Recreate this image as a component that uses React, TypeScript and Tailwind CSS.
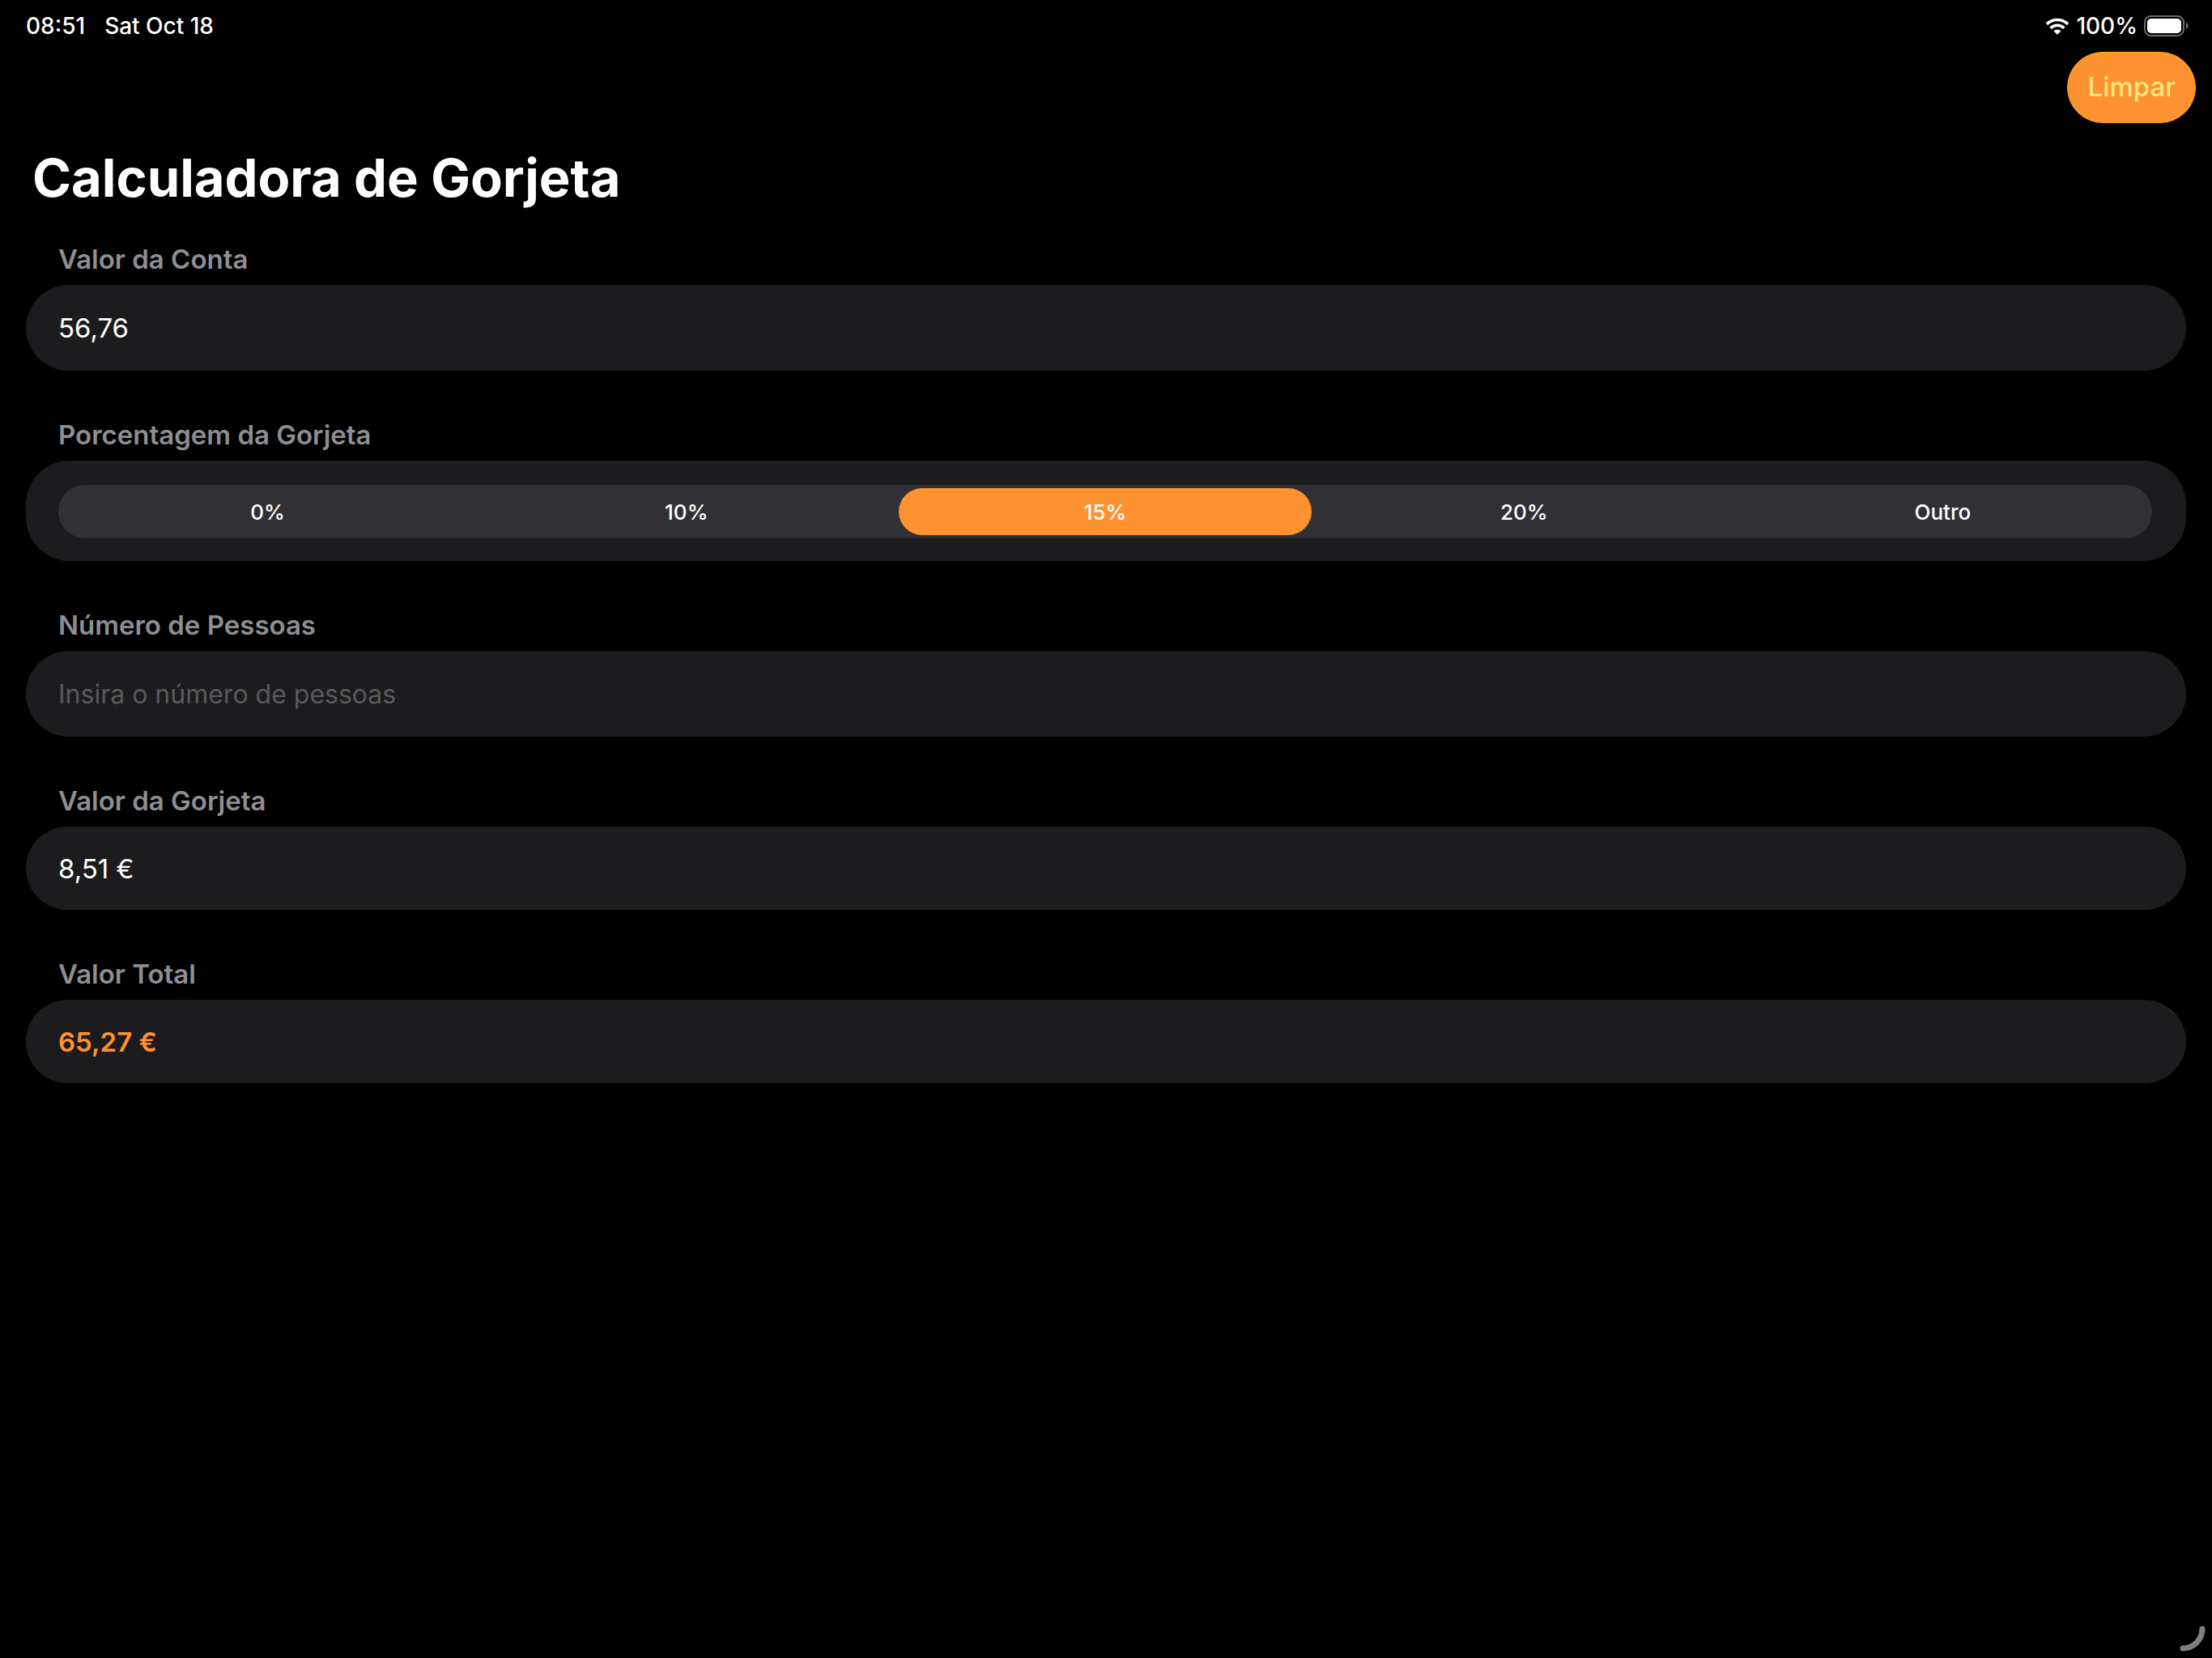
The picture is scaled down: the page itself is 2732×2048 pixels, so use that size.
import { useState } from "react";
import type { ReactNode } from "react";

const tipOptions = ["0%", "10%", "15%", "20%", "Outro"];

const cardClass =
  "flex items-center rounded-[54px] bg-[#1c1c1e] px-10 text-[33px] leading-10";

function WifiIcon() {
  return (
    <svg viewBox="0 0 30 21" className="h-[21px] w-[30px]" fill="none" aria-hidden="true">
      <path d="M1.900 7.900a18.600 18.600 0 0 1 26.200 0" stroke="white" strokeWidth="3.700" />
      <path d="M6.600 12.700a12 12 0 0 1 16.800 0" stroke="white" strokeWidth="3.700" />
      <path d="M15 20.800 10.500 16.400a6.400 6.400 0 0 1 9 0Z" fill="white" />
    </svg>
  );
}

function BatteryIcon() {
  return (
    <svg viewBox="0 0 56 26" className="h-[26px] w-14" fill="none" aria-hidden="true">
      <rect x="1" y="1" width="48" height="24" rx="7.5" stroke="#6b6b6b" strokeWidth="2" />
      <rect x="4" y="4" width="42" height="18" rx="5" fill="white" />
      <path d="M52 9v8c1.600-.7 2.700-2.200 2.700-4S53.600 9.700 52 9Z" fill="#6b6b6b" />
    </svg>
  );
}

function Section({ label, htmlFor, children }: { label: string; htmlFor: string; children: ReactNode }) {
  return (
    <section className="flex flex-col gap-3">
      <label htmlFor={htmlFor} id={htmlFor + "-label"} className="px-10 text-[33px] font-semibold leading-10 text-[#8e8e93]">
        {label}
      </label>
      {children}
    </section>
  );
}

export default function App() {
  const [bill, setBill] = useState("56,76");
  const [people, setPeople] = useState("");
  const [tip, setTip] = useState("15%");

  return (
    <div className="relative min-h-screen bg-black font-['Inter',sans-serif] text-white">
      <header>
        <div className="flex h-16 items-center justify-between pl-8 pr-7 text-[28px] font-medium">
          <div className="flex gap-6">
            <span>08:51</span>
            <span>Sat Oct 18</span>
          </div>
          <div className="flex items-center gap-2">
            <WifiIcon />
            <span>100%</span>
            <BatteryIcon />
          </div>
        </div>
        <div className="flex justify-end pr-5">
          <button
            type="button"
            onClick={() => {
              setBill("");
              setPeople("");
            }}
            className="h-[88px] rounded-full border border-[#ffab00] bg-[#ff9230] px-6 text-[33px] font-medium text-[#ffe680]"
          >
            Limpar
          </button>
        </div>
        <h1 className="mt-7 px-10 text-[65px] font-bold leading-20">Calculadora de Gorjeta</h1>
      </header>

      <main className="mt-10 flex flex-col gap-[59px] px-8">
        <Section label="Valor da Conta" htmlFor="bill">
          <div className={cardClass}>
            <input
              id="bill"
              value={bill}
              onChange={(e) => setBill(e.target.value)}
              className="h-[106px] w-full bg-transparent outline-none"
            />
          </div>
        </Section>

        <Section label="Porcentagem da Gorjeta" htmlFor="tip">
          <div className="rounded-[54px] bg-[#1c1c1e] pb-7 pl-10 pr-[42px] pt-[30px]">
            <div id="tip" role="radiogroup" aria-labelledby="tip-label" className="grid h-[66px] grid-cols-5 rounded-full bg-[#313135] py-1">
              {tipOptions.map((option) => (
                <button
                  key={option}
                  type="button"
                  role="radio"
                  aria-checked={option === tip}
                  onClick={() => setTip(option)}
                  className={
                    option === tip
                      ? "mx-1 rounded-full bg-[#ff9230] text-[26px] font-medium"
                      : "mx-1 rounded-full text-[26px] font-medium"
                  }
                >
                  {option}
                </button>
              ))}
            </div>
          </div>
        </Section>

        <Section label="Número de Pessoas" htmlFor="people">
          <div className={cardClass}>
            <input
              id="people"
              value={people}
              onChange={(e) => setPeople(e.target.value)}
              placeholder="Insira o número de pessoas"
              className="h-[106px] w-full bg-transparent outline-none placeholder:text-[32px] placeholder:text-[#5a5a5d]"
            />
          </div>
        </Section>

        <Section label="Valor da Gorjeta" htmlFor="tip-value">
          <div className={cardClass}>
            <output id="tip-value" className="flex h-[103px] items-center">8,51 €</output>
          </div>
        </Section>

        <Section label="Valor Total" htmlFor="total">
          <div className={cardClass}>
            <output id="total" className="flex h-[103px] items-center font-semibold text-[#ff9230]">65,27 €</output>
          </div>
        </Section>
      </main>

      <svg viewBox="0 0 34 34" className="absolute bottom-1.5 right-1.5 size-[34px]" fill="none" aria-hidden="true">
        <path d="M28 4a24 24 0 0 1-24 24" stroke="#808080" strokeWidth="7" strokeLinecap="round" />
      </svg>
    </div>
  );
}
